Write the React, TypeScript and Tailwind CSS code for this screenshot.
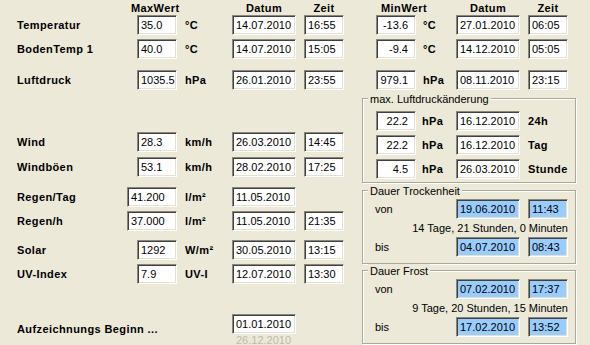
import React from "react";

function Edit({ value, w, right, blue, className = "" }: { value: string; w: string; right?: boolean; blue?: boolean; className?: string }) {
  return (
    <div
      className={`${w} h-[20px] shrink-0 border border-[#8a877a] border-r-white border-b-white shadow-[inset_1px_1px_0_#404040,inset_-1px_-1px_0_#e4e1d3] leading-[18px] whitespace-nowrap overflow-hidden ${blue ? "bg-[#99ccff]" : "bg-white"} ${right ? "text-right pr-[7px]" : "pl-[3px]"} ${className}`}
    >
      {value}
    </div>
  );
}

interface LeftRowProps {
  label: string;
  max: string;
  wide?: boolean;
  unit: string;
  date: string;
  time?: string;
}

function LeftCells({ label, max, wide, unit, date, time }: LeftRowProps) {
  return (
    <>
      <div className="w-[110px] shrink-0 font-bold tracking-[0.4px] whitespace-nowrap">{label}</div>
      <div className="w-[50px] shrink-0 flex justify-end">
        <Edit value={max} w={wide ? "w-[50px]" : "w-[40px]"} />
      </div>
      <div className="w-[55px] shrink-0 pl-[8px] font-bold tracking-[0.4px]">{unit}</div>
      <Edit value={date} w="w-[64px]" />
      {time ? <Edit value={time} w="w-[40px]" className="ml-[8px]" /> : null}
    </>
  );
}

function GroupBox({ title, className, children }: { title: string; className: string; children: React.ReactNode }) {
  return (
    <div className={`relative border border-[#aca899] shadow-[inset_1px_1px_0_#ffffff,1px_1px_0_#ffffff] ${className}`}>
      <div className="absolute -top-[7px] left-[5px] bg-[#ece9d8] px-[2px] leading-[14px] whitespace-nowrap">{title}</div>
      {children}
    </div>
  );
}

function PressureRow({ v, date, label }: { v: string; date: string; label: string }) {
  return (
    <div className="flex items-center h-[20px]">
      <Edit value={v} w="w-[40px]" right />
      <div className="w-[40px] shrink-0 pl-[6px] font-bold tracking-[0.4px]">hPa</div>
      <Edit value={date} w="w-[64px]" />
      <div className="pl-[8px] font-bold tracking-[0.4px]">{label}</div>
    </div>
  );
}

function Duration({ title, vonDate, vonTime, text, bisDate, bisTime, className }: { title: string; vonDate: string; vonTime: string; text: string; bisDate: string; bisTime: string; className: string }) {
  return (
    <GroupBox title={title} className={`w-[214px] h-[74px] pt-[8px] ${className}`}>
      <div className="flex items-center h-[20px]">
        <div className="w-[93px] pl-[12px]">von</div>
        <Edit value={vonDate} w="w-[64px]" blue />
        <Edit value={vonTime} w="w-[40px]" blue className="ml-[8px]" />
      </div>
      <div className="h-[18px] leading-[18px] text-right pr-[7px] whitespace-nowrap">{text}</div>
      <div className="flex items-center h-[20px]">
        <div className="w-[93px] pl-[12px]">bis</div>
        <Edit value={bisDate} w="w-[64px]" blue />
        <Edit value={bisTime} w="w-[40px]" blue className="ml-[8px]" />
      </div>
    </GroupBox>
  );
}

const topRows = [
  { label: "Temperatur", max: "35.0", unit: "°C", date: "14.07.2010", time: "16:55", min: "-13.6", minUnit: "°C", minDate: "27.01.2010", minTime: "06:05" },
  { label: "BodenTemp 1", max: "40.0", unit: "°C", date: "14.07.2010", time: "15:05", min: "-9.4", minUnit: "°C", minDate: "14.12.2010", minTime: "05:05" },
  { label: "Luftdruck", max: "1035.5", unit: "hPa", date: "26.01.2010", time: "23:55", min: "979.1", minUnit: "hPa", minDate: "08.11.2010", minTime: "23:15" },
];

export default function App() {
  return (
    <div className="w-[590px] h-[345px] overflow-hidden bg-[#ece9d8] text-black text-[11px] font-['Liberation_Sans',Arial,sans-serif]">
      {/* Header */}
      <div className="flex h-[15px] leading-[16px] font-bold tracking-[0.4px] pl-[17px]">
        <div className="w-[110px]" />
        <div className="w-[50px] text-center pl-[4px] whitespace-nowrap">MaxWert</div>
        <div className="w-[55px]" />
        <div className="w-[64px] text-center">Datum</div>
        <div className="w-[40px] ml-[8px] text-center">Zeit</div>
        <div className="w-[32px]" />
        <div className="w-[56px] text-center whitespace-nowrap">MinWert</div>
        <div className="w-[24px]" />
        <div className="w-[64px] text-center">Datum</div>
        <div className="w-[40px] ml-[8px] text-center">Zeit</div>
      </div>

      {/* Top rows */}
      {topRows.map((r, i) => (
        <div key={r.label} className={`flex items-center h-[20px] pl-[17px] ${i === 1 ? "mt-[4px]" : i === 2 ? "mt-[11px]" : ""}`}>
          <LeftCells label={r.label} max={r.max} unit={r.unit} date={r.date} time={r.time} />
          <div className="w-[32px] shrink-0" />
          <Edit value={r.min} w="w-[40px]" right />
          <div className="w-[40px] shrink-0 pl-[7px] font-bold tracking-[0.4px]">{r.minUnit}</div>
          <Edit value={r.minDate} w="w-[64px]" />
          <Edit value={r.minTime} w="w-[40px]" className="ml-[8px]" />
        </div>
      ))}

      <div className="flex">
        {/* Left column */}
        <div className="w-[362px] shrink-0 pl-[17px]">
          <div className="flex items-center h-[20px] mt-[42px]">
            <LeftCells label="Wind" max="28.3" unit="km/h" date="26.03.2010" time="14:45" />
          </div>
          <div className="flex items-center h-[20px] mt-[5px]">
            <LeftCells label="Windböen" max="53.1" unit="km/h" date="28.02.2010" time="17:25" />
          </div>
          <div className="flex items-center h-[20px] mt-[10px]">
            <LeftCells label="Regen/Tag" max="41.200" wide unit="l/m²" date="11.05.2010" />
          </div>
          <div className="flex items-center h-[20px] mt-[4px]">
            <LeftCells label="Regen/h" max="37.000" wide unit="l/m²" date="11.05.2010" time="21:35" />
          </div>
          <div className="flex items-center h-[20px] mt-[9px]">
            <LeftCells label="Solar" max="1292" unit="W/m²" date="30.05.2010" time="13:15" />
          </div>
          <div className="flex items-center h-[20px] mt-[4px]">
            <LeftCells label="UV-Index" max="7.9" unit="UV-I" date="12.07.2010" time="13:30" />
          </div>
          <div className="flex items-center h-[20px] mt-[30px]">
            <div className="w-[215px] shrink-0 font-bold tracking-[0.4px] whitespace-nowrap pt-[10px]">Aufzeichnungs Beginn ...</div>
            <Edit value="01.01.2010" w="w-[64px]" />
          </div>
          <div className="pl-[219px] leading-[13px] text-[#bdbaad]">26.12.2010</div>
        </div>

        {/* Right column */}
        <div className="w-[214px] shrink-0">
          <GroupBox title="max. Luftdruckänderung" className="w-[214px] h-[85px] mt-[8px] pt-[12px] pl-[13px] flex flex-col gap-[4px]">
            <PressureRow v="22.2" date="16.12.2010" label="24h" />
            <PressureRow v="22.2" date="16.12.2010" label="Tag" />
            <PressureRow v="4.5" date="26.03.2010" label="Stunde" />
          </GroupBox>
          <Duration
            title="Dauer Trockenheit"
            className="mt-[7px]"
            vonDate="19.06.2010"
            vonTime="11:43"
            text="14 Tage, 21 Stunden, 0 Minuten"
            bisDate="04.07.2010"
            bisTime="08:43"
          />
          <Duration
            title="Dauer Frost"
            className="mt-[6px]"
            vonDate="07.02.2010"
            vonTime="17:37"
            text="9 Tage, 20 Stunden, 15 Minuten"
            bisDate="17.02.2010"
            bisTime="13:52"
          />
        </div>
      </div>
    </div>
  );
}
